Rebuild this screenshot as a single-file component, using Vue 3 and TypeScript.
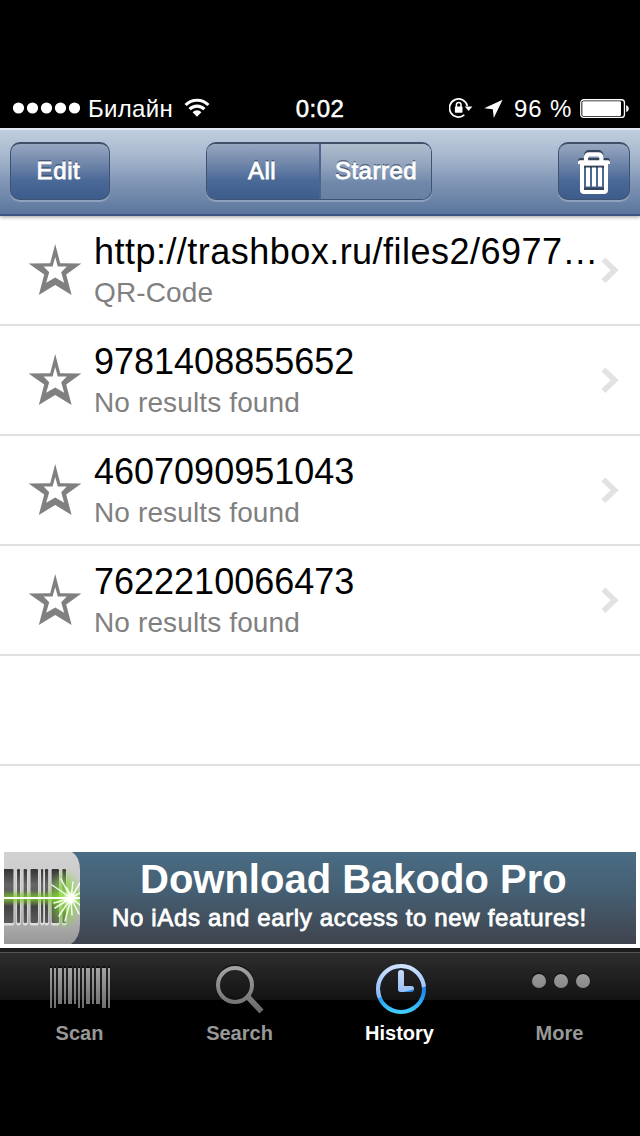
<script setup lang="ts">
interface Entry {
  title: string
  subtitle: string
  link?: boolean
}

interface Bar {
  x: number
  w: number
  h: number
}

const entries: Entry[] = [
  { title: 'http://trashbox.ru/files2/6977…', subtitle: 'QR-Code', link: true },
  { title: '9781408855652', subtitle: 'No results found' },
  { title: '4607090951043', subtitle: 'No results found' },
  { title: '7622210066473', subtitle: 'No results found' },
]

const signalDots: number[] = [5.5, 19.5, 33.5, 47.5, 61.5]

const scanBars: Bar[] = [
  { x: 50, w: 2, h: 40 },
  { x: 54, w: 2, h: 40 },
  { x: 58, w: 4, h: 36 },
  { x: 64, w: 2, h: 36 },
  { x: 68, w: 4, h: 36 },
  { x: 74, w: 2, h: 36 },
  { x: 78, w: 2, h: 40 },
  { x: 82, w: 2, h: 40 },
  { x: 86, w: 4, h: 36 },
  { x: 92, w: 2, h: 36 },
  { x: 96, w: 4, h: 36 },
  { x: 102, w: 4, h: 40 },
  { x: 108, w: 2, h: 40 },
]

const logoBars: Bar[] = [
  { x: -4, w: 13.5, h: 54 },
  { x: 13, w: 3, h: 54 },
  { x: 19.6, w: 3.4, h: 54 },
  { x: 26.5, w: 7.5, h: 54 },
  { x: 37, w: 2.2, h: 54 },
  { x: 41, w: 3.2, h: 54 },
  { x: 47.6, w: 7.4, h: 54 },
  { x: 58.4, w: 3.6, h: 54 },
]
</script>

<template>
  <div class="screen">
    <header class="status">
      <div class="status-left">
        <svg class="dots" width="67" height="12" viewBox="0 0 67 12">
          <circle v-for="cx in signalDots" :key="cx" :cx="cx" cy="6" r="5.6" fill="#fff" />
        </svg>
        <span class="carrier">Билайн</span>
        <svg class="wifi" width="26" height="20" viewBox="0 0 26 20">
          <g fill="none" stroke="#fff" stroke-width="3.1">
            <path d="M1.6 7 A16.2 16.2 0 0 1 24.4 7" />
            <path d="M5.6 11.2 A10.5 10.5 0 0 1 20.4 11.2" />
          </g>
          <path d="M8.6 14.2 A6.2 6.2 0 0 1 17.4 14.2 L13 18.8 Z" fill="#fff" />
        </svg>
      </div>
      <span class="time">0:02</span>
      <div class="status-right">
        <svg class="lock" width="24" height="22" viewBox="0 0 24 22">
          <path d="M15.3 17.9 A9 9 0 1 1 18.3 9.1" fill="none" stroke="#fff" stroke-width="1.7" />
          <path d="M15.8 9.6 H23.4 L19.6 14 Z" fill="#fff" />
          <rect x="5.9" y="9.6" width="7.6" height="6.2" rx="0.8" fill="#fff" />
          <path d="M7.4 10 V7.8 A2.3 2.3 0 0 1 12 7.8 V10" fill="none" stroke="#fff" stroke-width="1.5" />
        </svg>
        <svg class="arrow" width="19" height="20" viewBox="0 0 19 20">
          <path d="M18.6 0.8 L9.8 19 L8.8 10.2 L0.2 9.2 Z" fill="#fff" />
        </svg>
        <span class="percent">96 %</span>
        <svg class="battery" width="50" height="20" viewBox="0 0 50 20">
          <rect x="0.75" y="0.75" width="43.7" height="17.7" rx="3" fill="none" stroke="#fff" stroke-width="1.3" />
          <rect x="2.3" y="2.3" width="38.7" height="14.6" rx="1.2" fill="#fff" />
          <path d="M46.2 6.2 C49.6 7.2 49.6 12 46.2 13 Z" fill="#fff" />
        </svg>
      </div>
    </header>

    <nav class="navbar">
      <button class="btn edit"><span>Edit</span></button>
      <div class="segments">
        <span class="segment active">All</span>
        <span class="segment">Starred</span>
      </div>
      <button class="btn trash">
        <svg width="34" height="46" viewBox="0 0 34 46">
          <path d="M9 12 V6.6 Q9 3 12.6 3 H20.8 Q24.4 3 24.4 6.6 V12" fill="none" stroke="#35445c" stroke-width="4" />
          <path d="M1 12.5 V11.6 Q1 9 4 9 H30 Q33 9 33 11.6 V12.5 Z" fill="#35445c" />
          <path d="M9 12 V9 Q9 5.4 12.4 5.4 H21 Q24.4 5.4 24.4 9 V12" fill="none" stroke="#fff" stroke-width="4.2" />
          <path
            fill="#fff"
            d="M3 11.2 H31 Q33 11.2 33 13 V15 H31 V41 Q31 45 27 45 H7 Q3 45 3 41 V15 H1 V13 Q1 11.2 3 11.2 Z"
          />
          <path d="M7 16.8 H27 V41 H7 Z" fill="#4d6794" />
          <path d="M7 16.8 H27 V19 H7 Z M7 38.6 H27 V41 H7 Z" fill="#35445c" />
          <path d="M9 18.5 H13 V37.5 H9 Z M15 18.5 H19 V37.5 H15 Z M21 18.5 H25 V37.5 H21 Z" fill="#fff" />
        </svg>
      </button>
    </nav>

    <main class="content">
      <ul class="list">
        <li v-for="entry in entries" :key="entry.title" class="row">
          <svg class="star" width="54" height="52" viewBox="0 0 54 52">
            <path
              fill="#808080"
              fill-rule="evenodd"
              d="M27.2 0 L32.2 19.2 L53.4 19.4 L38.2 30.6 L43.6 51 L27.2 41 L10.8 51 L16.2 30.6 L0.6 19.4 L22.2 19.2 Z M27.2 13 L24.6 22.6 L15.6 22.6 L21.2 28.2 L18.2 38.8 L27.2 33.6 L36.2 38.8 L33.2 28.2 L38.8 22.6 L29.8 22.6 Z"
            />
          </svg>
          <div class="texts">
            <div class="title" :class="{ link: entry.link }">{{ entry.title }}</div>
            <div class="subtitle">{{ entry.subtitle }}</div>
          </div>
          <svg class="chevron" width="18" height="27" viewBox="0 0 18 27">
            <path d="M2.4 2.6 L13.6 13.3 L2.4 24" fill="none" stroke="#e2e2e4" stroke-width="5.6" />
          </svg>
        </li>
        <li class="row"></li>
      </ul>

      <section class="banner">
        <svg class="logo" width="76" height="92" viewBox="0 0 76 92">
          <defs>
            <linearGradient id="plate" x1="0" y1="0" x2="0" y2="1">
              <stop offset="0" stop-color="#d2d2d2" />
              <stop offset="0.5" stop-color="#c6c6c6" />
              <stop offset="1" stop-color="#979797" />
            </linearGradient>
            <linearGradient id="ink" x1="0" y1="0" x2="0" y2="1">
              <stop offset="0" stop-color="#333" />
              <stop offset="0.3" stop-color="#666" />
              <stop offset="0.7" stop-color="#444" />
              <stop offset="1" stop-color="#5a5a5a" />
            </linearGradient>
            <linearGradient id="beam" x1="0" y1="0" x2="0" y2="1">
              <stop offset="0" stop-color="#7fd02c" stop-opacity="0" />
              <stop offset="0.5" stop-color="#7fd02c" />
              <stop offset="1" stop-color="#7fd02c" stop-opacity="0" />
            </linearGradient>
            <radialGradient id="glow">
              <stop offset="0" stop-color="#b0ec70" />
              <stop offset="0.45" stop-color="#82d236" stop-opacity="0.65" />
              <stop offset="1" stop-color="#8fe040" stop-opacity="0" />
            </radialGradient>
            <radialGradient id="core">
              <stop offset="0" stop-color="#fff" />
              <stop offset="0.4" stop-color="#fff" stop-opacity="0.8" />
              <stop offset="1" stop-color="#fff" stop-opacity="0" />
            </radialGradient>
            <clipPath id="plateShape">
              <path d="M0 0 H68 Q76 5 76 18 V72 Q76 86 67 92 H0 Z" />
            </clipPath>
          </defs>
          <g clip-path="url(#plateShape)">
            <rect width="76" height="92" fill="url(#plate)" />
            <rect
              v-for="bar in logoBars"
              :key="'edge' + bar.x"
              :x="bar.x - 0.7"
              y="18"
              :width="bar.w + 1.4"
              height="55.5"
              rx="2"
              fill="#dedede"
            />
            <rect
              v-for="bar in logoBars"
              :key="bar.x"
              :x="bar.x"
              y="17"
              :width="bar.w"
              :height="bar.h"
              rx="1.2"
              fill="url(#ink)"
            />
            <rect x="0" y="38" width="76" height="16" fill="url(#beam)" opacity="0.85" />
            <ellipse cx="61" cy="47" rx="19" ry="31" fill="url(#glow)" />
            <rect x="0" y="45" width="76" height="2" fill="#fff" />
            <g stroke="#fff" stroke-width="1.5" stroke-linecap="round" opacity="0.9">
              <path d="M67 46 L48 33 M67 46 L51 56 M67 46 L55 64 M67 46 L61 69 M67 46 L57 27 M67 46 L69 30 M67 46 L76 31 M67 46 L76 41 M67 46 L76 53 M67 46 L75 62 M67 46 L68 63 M67 46 L63 36 M67 46 L50 51" />
            </g>
            <circle cx="67" cy="46" r="8" fill="url(#core)" />
          </g>
        </svg>
        <div class="banner-text">
          <div class="banner-title">Download Bakodo Pro</div>
          <div class="banner-sub">No iAds and early access to new features!</div>
        </div>
      </section>
    </main>

    <footer class="tabbar">
      <div class="tab">
        <svg width="160" height="64" viewBox="0 952 160 64">
          <defs>
            <linearGradient id="metal" gradientUnits="userSpaceOnUse" x1="0" y1="964" x2="0" y2="1014">
              <stop offset="0" stop-color="#a8a8a8" />
              <stop offset="1" stop-color="#666" />
            </linearGradient>
          </defs>
          <rect v-for="bar in scanBars" :key="'s' + bar.x" :x="bar.x" y="966" :width="bar.w" :height="2" fill="#111" />
          <rect v-for="bar in scanBars" :key="bar.x" :x="bar.x" y="968" :width="bar.w" :height="bar.h" fill="url(#metal)" />
        </svg>
        <span class="label">Scan</span>
      </div>
      <div class="tab">
        <svg width="160" height="64" viewBox="0 952 160 64">
          <circle cx="75" cy="983.4" r="17" fill="none" stroke="#111" stroke-width="4" />
          <path d="M87.5 996.5 L101.5 1011.5" stroke="url(#metal)" stroke-width="5.6" />
          <circle cx="75" cy="985" r="17" fill="none" stroke="url(#metal)" stroke-width="4" />
        </svg>
        <span class="label">Search</span>
      </div>
      <div class="tab selected">
        <svg width="160" height="64" viewBox="0 952 160 64">
          <defs>
            <linearGradient id="sky" gradientUnits="userSpaceOnUse" x1="0" y1="964" x2="0" y2="1000">
              <stop offset="0" stop-color="#d6e4fa" />
              <stop offset="1" stop-color="#85b3ef" />
            </linearGradient>
            <linearGradient id="deep" gradientUnits="userSpaceOnUse" x1="0" y1="984" x2="0" y2="1014">
              <stop offset="0" stop-color="#2079e6" />
              <stop offset="0.4" stop-color="#2196f0" />
              <stop offset="1" stop-color="#45d2ff" />
            </linearGradient>
            <clipPath id="shine">
              <path d="M50 950 H112 V985 Q84 992 50 1000 Z" />
            </clipPath>
          </defs>
          <g fill="none" stroke="url(#deep)" stroke-linecap="round">
            <circle cx="81" cy="989" r="23" stroke-width="4" />
            <path d="M81 973 V989.1 H91" stroke-width="6" stroke-linejoin="round" />
          </g>
          <g fill="none" stroke="url(#sky)" stroke-linecap="round" clip-path="url(#shine)">
            <circle cx="81" cy="989" r="23" stroke-width="4" />
            <path d="M81 973 V989.1 H91" stroke-width="6" stroke-linejoin="round" />
          </g>
        </svg>
        <span class="label">History</span>
      </div>
      <div class="tab">
        <svg width="160" height="64" viewBox="0 952 160 64">
          <g fill="#111">
            <circle cx="59" cy="979.4" r="7" />
            <circle cx="81" cy="979.4" r="7" />
            <circle cx="103" cy="979.4" r="7" />
          </g>
          <g fill="url(#metal)">
            <circle cx="59" cy="981" r="7" />
            <circle cx="81" cy="981" r="7" />
            <circle cx="103" cy="981" r="7" />
          </g>
        </svg>
        <span class="label">More</span>
      </div>
    </footer>
  </div>
</template>

<style>
body {
  margin: 0;
  background: #000;
}
</style>

<style scoped>
.screen {
  box-sizing: border-box;
  width: 640px;
  height: 1136px;
  padding-top: 88px;
  overflow: hidden;
  display: flex;
  flex-direction: column;
  background: #000;
  font-family: 'Liberation Sans', Arial, sans-serif;
}

.status {
  flex: none;
  height: 40px;
  display: grid;
  grid-template-columns: 1fr auto 1fr;
  align-items: center;
  color: #fff;
  font-size: 24px;
  line-height: 28px;
}

.status-left,
.status-right {
  display: flex;
  align-items: center;
}

.status-left {
  padding-left: 13px;
}

.carrier {
  margin: 2px 0 0 8px;
  width: 96px;
  letter-spacing: 0.3px;
}

.wifi {
  margin-bottom: 1px;
}

.time {
  margin-top: 2px;
  letter-spacing: 0.4px;
  -webkit-text-stroke: 0.5px #fff;
}

.status-right {
  justify-content: flex-end;
  padding-right: 10px;
}

.lock {
  margin-right: 11px;
}

.arrow {
  margin: 1px 11px 0 0;
}

.percent {
  margin-top: 2px;
  width: 66px;
  letter-spacing: 0.9px;
  white-space: nowrap;
}

.battery {
  margin-top: 2px;
}

.navbar {
  flex: none;
  box-sizing: border-box;
  height: 88px;
  padding: 14px 10px 0;
  display: flex;
  align-items: flex-start;
  position: relative;
  z-index: 1;
  background: linear-gradient(#c2cfdf 0%, #a9b9cf 30%, #8297b7 60%, #58749b 100%);
  box-shadow:
    inset 0 2px 0 #e0e7ef,
    inset 0 -2px 0 #3b5684,
    0 1px 4px rgba(0, 0, 0, 0.4);
}

.btn,
.segments {
  box-sizing: border-box;
  height: 58px;
  border: 1px solid #3f5371;
  border-top: 2px solid #414f66;
  border-radius: 10px;
  color: #fff;
  font: 24px/28px 'Liberation Sans', Arial, sans-serif;
  -webkit-text-stroke: 0.8px #fff;
  text-shadow: 0 -2px 0 rgba(45, 60, 85, 0.65);
  box-shadow: 0 2px 0 rgba(255, 255, 255, 0.25);
}

.btn {
  padding: 0;
  display: flex;
  align-items: center;
  justify-content: center;
  background: linear-gradient(#96a7c1 0%, #7187aa 35%, #4c6a98 65%, #3c5c8c 100%);
}

.edit {
  width: 100px;
  letter-spacing: 0.6px;
  padding: 0 3px 2px 0;
}

.segments {
  width: 226px;
  margin-left: 96px;
  display: flex;
  overflow: hidden;
}

.segment {
  flex: 1;
  display: flex;
  align-items: center;
  justify-content: center;
  padding-bottom: 2px;
  letter-spacing: 0.5px;
  background: linear-gradient(#b0bdce 0%, #91a3bd 40%, #7089aa 70%, #6781a5 100%);
}

.segment.active {
  padding-right: 2px;
  background: linear-gradient(#96a7c1 0%, #7187aa 35%, #4c6a98 65%, #3c5c8c 100%);
  border-right: 2px solid #4c648e;
}

.trash {
  width: 72px;
  margin-left: auto;
}

.content {
  flex: none;
  box-sizing: border-box;
  height: 732px;
  display: flex;
  flex-direction: column;
  justify-content: space-between;
  padding-bottom: 4px;
  background: #fff;
}

.list {
  margin: 0;
  padding: 0;
  list-style: none;
}

.row {
  box-sizing: border-box;
  height: 110px;
  padding-left: 28px;
  display: flex;
  border-bottom: 2px solid #e0e0e0;
}

.star {
  flex: none;
  margin-top: 28px;
}

.texts {
  width: 517px;
  margin-left: 12px;
  padding-top: 16px;
  white-space: nowrap;
}

.title {
  height: 44px;
  font-size: 36px;
  line-height: 40px;
  color: #000;
}

.title.link {
  letter-spacing: 0.47px;
}

.subtitle {
  font-size: 28px;
  line-height: 34px;
  letter-spacing: 0.13px;
  color: #808080;
}

.chevron {
  flex: none;
  margin: 41px 0 0 -10px;
}

.banner {
  height: 92px;
  margin: 0 4px;
  display: flex;
  background: linear-gradient(#496c84 0%, #456074 40%, #40444e 100%);
}

.logo {
  flex: none;
}

.banner-text {
  flex: 1;
  padding-top: 5px;
  color: #fff;
  white-space: nowrap;
}

.banner-title {
  margin-left: 60px;
  font-size: 40px;
  line-height: 44px;
  font-weight: bold;
}

.banner-sub {
  margin: 3px 0 0 32px;
  font-size: 24px;
  line-height: 28px;
  letter-spacing: 0.65px;
  -webkit-text-stroke: 0.8px #fff;
}

.tabbar {
  flex: none;
  box-sizing: border-box;
  height: 188px;
  border-top: 4px solid #1c1c1c;
  display: grid;
  grid-template-columns: repeat(4, 160px);
  background: linear-gradient(#2e2e2e, #131313) 0 0 / 100% 48px no-repeat #000;
  box-shadow: inset 0 1px 0 #555;
}

.tab {
  display: flex;
  flex-direction: column;
  align-items: center;
  color: #989898;
}

.tab svg {
  display: block;
}

.label {
  margin: 5px 1px 0 0;
  font-size: 20px;
  line-height: 24px;
  font-weight: bold;
}

.selected {
  color: #fff;
}
</style>
